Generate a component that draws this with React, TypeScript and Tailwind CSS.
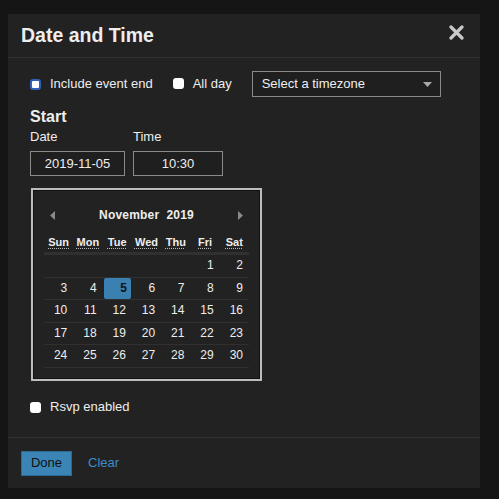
import React from 'react';

const days = ['Sun', 'Mon', 'Tue', 'Wed', 'Thu', 'Fri', 'Sat'];
const weeks: (number | null)[][] = [
  [null, null, null, null, null, 1, 2],
  [3, 4, 5, 6, 7, 8, 9],
  [10, 11, 12, 13, 14, 15, 16],
  [17, 18, 19, 20, 21, 22, 23],
  [24, 25, 26, 27, 28, 29, 30],
];

const Box: React.FC<{ focused?: boolean }> = ({ focused }) => (
  <span
    className={
      'inline-block w-[11px] h-[11px] rounded-[3px] bg-white shrink-0 ' +
      (focused ? 'border-2 border-[#2f5fb8]' : '')
    }
  />
);

export default function App() {
  return (
    <div
      className="w-[499px] h-[499px] bg-[#151515] pt-[14px] pl-[8px] text-[#eeeeee]"
      style={{ fontFamily: '"Liberation Sans", Arial, sans-serif' }}
    >
      <div className="w-[472px] h-[474px] bg-[#222222] flex flex-col">
        {/* Header */}
        <div className="h-[44px] flex items-center justify-between pl-[13px] pr-[16px] border-b border-[#2f2f2f]">
          <h1 className="text-[19.5px] font-bold text-[#eeeeee] mt-[1px]">Date and Time</h1>
          <svg width="15" height="15" viewBox="0 0 15 15" className="-mt-[7px]">
            <path d="M2 2 L13 13 M13 2 L2 13" stroke="#c8c8c8" strokeWidth="3.2" strokeLinecap="round" />
          </svg>
        </div>

        {/* Body */}
        <div className="flex-1 pl-[22px] pt-[12px]">
          <div className="flex items-center h-[26px] mt-[1px]">
            <Box focused />
            <span className="ml-[9px] text-[13px]">Include event end</span>
            <span className="ml-[20px]"><Box /></span>
            <span className="ml-[9px] text-[13px]">All day</span>
            <div className="ml-[20px] w-[189px] h-[26px] border border-[#8a8a8a] bg-[#1f1f1f] flex items-center justify-between pl-[9px] pr-[8px]">
              <span className="text-[13px]">Select a timezone</span>
              <svg width="9" height="5" viewBox="0 0 9 5">
                <path d="M0 0 H9 L4.5 5 Z" fill="#a8a8a8" />
              </svg>
            </div>
          </div>

          <div className="mt-[10px] text-[16px] font-bold leading-[19px]">Start</div>
          <div className="flex gap-[8px] mt-[3px]">
            <div className="flex flex-col">
              <span className="text-[13px] leading-[16px]">Date</span>
              <div className="mt-[6px] w-[95px] h-[25px] border border-[#8a8a8a] bg-[#1f1f1f] flex items-center justify-center text-[13px]">
                2019-11-05
              </div>
            </div>
            <div className="flex flex-col">
              <span className="text-[13px] leading-[16px]">Time</span>
              <div className="mt-[6px] w-[90px] h-[25px] border border-[#8a8a8a] bg-[#1f1f1f] flex items-center justify-center text-[13px]">
                10:30
              </div>
            </div>
          </div>

          {/* Calendar */}
          <div className="mt-[12px] ml-[1px] w-[231px] h-[193px] border-2 border-[#bdbdbd] bg-[#222222] shadow-[inset_0_0_0_1px_#111]">
            <div className="px-[11px] pt-[17px]">
              <div className="flex items-center justify-between px-[6px] h-[16px]">
                <svg width="5" height="9" viewBox="0 0 5 9">
                  <path d="M5 0 V9 L0 4.5 Z" fill="#8a8a8a" />
                </svg>
                <span className="text-[12px] font-bold tracking-[0.2px]">November&nbsp; 2019</span>
                <svg width="5" height="9" viewBox="0 0 5 9">
                  <path d="M0 0 V9 L5 4.5 Z" fill="#8a8a8a" />
                </svg>
              </div>
              <div className="grid grid-cols-7 mt-[12px] w-[205px] border-b-[3px] border-[#303030] pb-[2px]">
                {days.map((d) => (
                  <div key={d} className="text-center text-[11px] font-bold leading-[15px]">
                    <span className="underline decoration-dotted underline-offset-2 decoration-[#bbbbbb]">{d}</span>
                  </div>
                ))}
              </div>
              {weeks.map((w, i) => (
                <div key={i} className="grid grid-cols-7 w-[205px] h-[22.5px] border-b border-[#303030] items-center">
                  {w.map((n, j) => (
                    <div key={j} className="flex justify-end px-[1px] h-[21px]">
                      {n === 5 ? (
                        <div className="w-full h-[21px] rounded-[2px] bg-[#3a80b0] text-[#111111] text-[12px] font-bold flex items-center justify-end pr-[4px]">
                          5
                        </div>
                      ) : (
                        <span className="text-[12px] leading-[21px] pr-[5px]">{n ?? ''}</span>
                      )}
                    </div>
                  ))}
                </div>
              ))}
            </div>
          </div>

          <div className="flex items-center mt-[18px] h-[16px]">
            <Box />
            <span className="ml-[9px] text-[13px]">Rsvp enabled</span>
          </div>
        </div>

        {/* Footer */}
        <div className="h-[51px] border-t border-[#303030] flex items-center pl-[13px]">
          <button className="w-[51px] h-[25px] bg-[#3a84b6] border border-[#2c6a96] text-[#111111] text-[13px]">
            Done
          </button>
          <span className="ml-[16px] text-[13px] text-[#3d8dc6]">Clear</span>
        </div>
      </div>
    </div>
  );
}
